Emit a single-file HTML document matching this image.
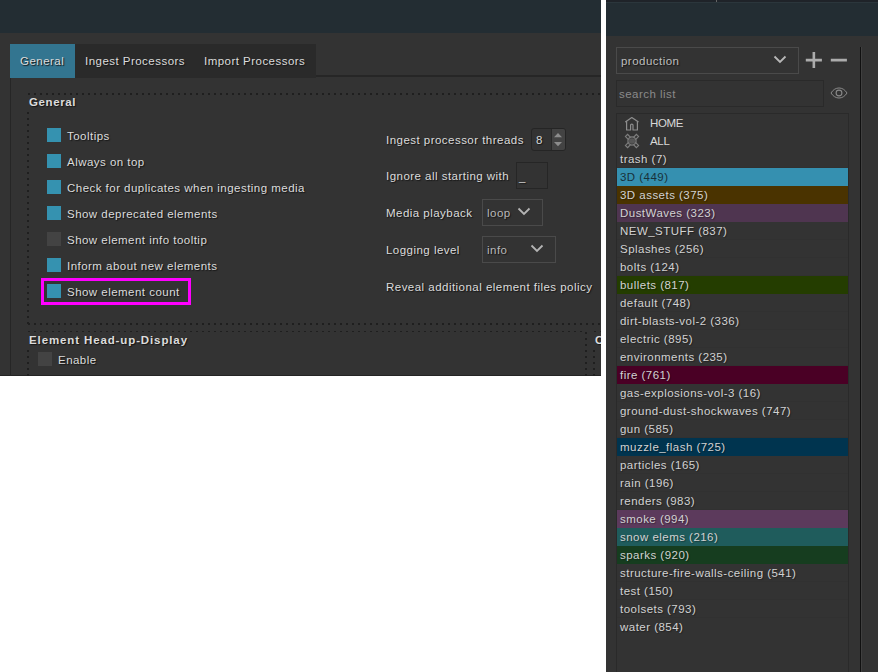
<!DOCTYPE html>
<html><head><meta charset="utf-8">
<style>
*{box-sizing:border-box;margin:0;padding:0}
html,body{width:878px;height:672px;overflow:hidden;background:#fff}
body{position:relative;font-family:"Liberation Sans",sans-serif;font-size:11.5px;letter-spacing:0.47px;color:#dcdcdc}
.a{position:absolute}
.t{position:absolute;white-space:nowrap;line-height:14px;height:14px}
.sh{text-shadow:1px 1px 1px #151515}
.b{font-weight:bold;letter-spacing:0.62px}
.hd{position:absolute;height:2px;background:repeating-linear-gradient(90deg,#1f1f1f 0 2px,transparent 2px 6px)}
.vd{position:absolute;width:2px;background:repeating-linear-gradient(180deg,#1f1f1f 0 2px,transparent 2px 6px)}
.cb{position:absolute;width:14px;height:14px;background:#3592b0}
.cb.off{background:#434343}
.row{position:absolute;left:617px;width:231px;height:18px}
.it{position:absolute;left:620px;white-space:nowrap;line-height:14px;height:14px;color:#d2d2d2;text-shadow:1px 1px 1px rgba(0,0,0,0.35)}
</style></head><body>

<!-- LEFT PANEL -->
<div class="a" style="left:0;top:0;width:601px;height:376px;background:#333333;overflow:hidden">
  <div class="a" style="left:0;top:0;width:601px;height:33px;background:#232d33"></div>
  <div class="a" style="left:0;top:375px;width:601px;height:1px;background:#242424"></div>
  <!-- tab frame -->
  <div class="a" style="left:10px;top:75px;width:600px;height:2px;background:#262626"></div>
  <div class="a" style="left:10px;top:76px;width:1px;height:300px;background:#262626"></div>
  <!-- tabs -->
  <div class="a" style="left:10px;top:44px;width:65px;height:34px;background:#337590"></div>
  <div class="a" style="left:75px;top:44px;width:241px;height:34px;background:#2a2a2a"></div>
  <div class="t sh" style="left:20px;top:54px">General</div>
  <div class="t sh" style="left:85px;top:54px">Ingest Processors</div>
  <div class="t sh" style="left:204px;top:54px">Import Processors</div>

  <!-- group 1 -->
  <div class="hd" style="left:28px;top:93px;width:580px;height:1.5px"></div>
  <div class="vd" style="left:27px;top:112px;height:212px"></div>
  <div class="hd" style="left:28px;top:323px;width:580px"></div>
  <div class="t sh b" style="left:29px;top:95px">General</div>

  <div class="cb" style="left:47px;top:128px"></div>
  <div class="t sh" style="left:67px;top:129px">Tooltips</div>
  <div class="cb" style="left:47px;top:154px"></div>
  <div class="t sh" style="left:67px;top:155px">Always on top</div>
  <div class="cb" style="left:47px;top:180px"></div>
  <div class="t sh" style="left:67px;top:181px">Check for duplicates when ingesting media</div>
  <div class="cb" style="left:47px;top:206px"></div>
  <div class="t sh" style="left:67px;top:207px">Show deprecated elements</div>
  <div class="cb off" style="left:47px;top:232px"></div>
  <div class="t sh" style="left:67px;top:233px">Show element info tooltip</div>
  <div class="cb" style="left:47px;top:258px"></div>
  <div class="t sh" style="left:67px;top:259px">Inform about new elements</div>
  <div class="cb" style="left:47px;top:284px"></div>
  <div class="t sh" style="left:67px;top:285px">Show element count</div>
  <div class="a" style="left:41px;top:278px;width:150px;height:27px;border:3px solid #ff00ff"></div>

  <div class="t sh" style="left:386px;top:133px">Ingest processor threads</div>
  <div class="a" style="left:531px;top:128px;width:35px;height:23px;border:1px solid #252525;border-radius:3px;background:#333"></div>
  <div class="a" style="left:551px;top:129px;width:1px;height:21px;background:#282828"></div>
  <div class="a" style="left:552px;top:129px;width:13px;height:21px;background:#434343;border-radius:0 2px 2px 0"></div>
  <svg class="a" style="left:552px;top:129px" width="13" height="21"><path d="M2 8.3 L6 4 L10 8.3Z M2 13 L6 17.2 L10 13Z" fill="#8c8c8c"/></svg>
  <div class="t sh" style="left:536px;top:133px;color:#d8d8d8">8</div>

  <div class="t sh" style="left:386px;top:169px">Ignore all starting with</div>
  <div class="a" style="left:516px;top:162px;width:32px;height:27px;border:1px solid #262626"></div>
  <div class="t sh" style="left:519px;top:170px;color:#d8d8d8">_</div>

  <div class="t sh" style="left:386px;top:206px">Media playback</div>
  <div class="a" style="left:482px;top:199px;width:61px;height:27px;border:1px solid #4a4a4a"></div>
  <div class="t sh" style="left:487px;top:206px;color:#b8b8b8">loop</div>
  <svg class="a" style="left:517px;top:207px" width="14" height="10"><path d="M1.5 1.5 L7 7 L12.5 1.5" stroke="#b4b4b4" stroke-width="1.8" fill="none"/></svg>

  <div class="t sh" style="left:386px;top:243px">Logging level</div>
  <div class="a" style="left:482px;top:236px;width:74px;height:27px;border:1px solid #4a4a4a"></div>
  <div class="t sh" style="left:487px;top:243px;color:#b8b8b8">info</div>
  <svg class="a" style="left:530px;top:244px" width="14" height="10"><path d="M1.5 1.5 L7 7 L12.5 1.5" stroke="#b4b4b4" stroke-width="1.8" fill="none"/></svg>

  <div class="t sh" style="left:386px;top:280px">Reveal additional element files policy</div>

  <!-- group 2 -->
  <div class="hd" style="left:28px;top:331px;width:554px;height:1px"></div>
  <div class="vd" style="left:27px;top:350px;height:30px"></div>
  <div class="vd" style="left:585px;top:332px;height:50px"></div>
  <div class="t sh b" style="left:29px;top:333px;letter-spacing:0.88px">Element Head-up-Display</div>
  <div class="cb off" style="left:38px;top:352px"></div>
  <div class="t sh" style="left:58px;top:353px">Enable</div>
  <!-- group 3 -->
  <div class="hd" style="left:594px;top:331px;width:20px;height:1px"></div>
  <div class="vd" style="left:593px;top:350px;height:30px"></div>
  <div class="t sh b" style="left:595px;top:333px">C</div>
</div>

<!-- RIGHT PANEL -->
<div class="a" style="left:606px;top:0;width:272px;height:672px;background:#333333;overflow:hidden">
  <div class="a" style="left:0;top:0;width:272px;height:36px;background:#232d33"></div>
  <div class="a" style="left:0;top:0;width:272px;height:2px;background:#1f2329"></div>
  <div class="a" style="left:0;top:2px;width:272px;height:1px;background:#2b363c"></div>
  <div class="a" style="left:110px;top:0;width:1px;height:2px;background:#666"></div>
</div>

<div class="a" style="left:616px;top:47px;width:183px;height:27px;border:1px solid #4a4a4a"></div>
<div class="t sh" style="left:621px;top:54px;color:#bebebe">production</div>
<svg class="a" style="left:773px;top:55px" width="14" height="10"><path d="M1.5 1.5 L7 7 L12.5 1.5" stroke="#b8b8b8" stroke-width="1.8" fill="none"/></svg>
<svg class="a" style="left:800px;top:44px" width="52" height="30"><path d="M5.8 16.1 H21.9 M13.85 8 V24 M30.8 16.1 H46.9" stroke="#acacac" stroke-width="2.6" fill="none"/></svg>

<div class="a" style="left:616px;top:80px;width:208px;height:27px;border:1px solid #2a2a2a"></div>
<div class="t" style="left:619px;top:87px;color:#8a8a8a">search list</div>
<svg class="a" style="left:828px;top:84px" width="22" height="18"><path d="M3 9 C7 2.3 15 2.3 19 9 C15 15.7 7 15.7 3 9Z" stroke="#8a8a8a" stroke-width="1" fill="none"/><circle cx="11" cy="9" r="2.9" stroke="#8a8a8a" stroke-width="1.1" fill="none"/></svg>

<div class="a" style="left:860px;top:47px;width:1px;height:625px;background:#101010"></div>
<div class="a" style="left:861px;top:47px;width:1px;height:625px;background:#404040"></div>

<!-- list -->
<div class="a" style="left:616px;top:113px;width:233px;height:570px;border:1px solid #2a2a2a;background:#333"></div>
<div class="a" style="left:617px;top:167px;width:231px;height:468px;background:repeating-linear-gradient(180deg,#313131 0 1px,transparent 1px 18px)"></div>
<svg class="a" style="left:620px;top:114px" width="24" height="18"><path d="M5.3 8.1 L11.8 3.5 L18.5 8.1 M6.6 7.6 V16 H10.6 V11 Q10.6 10.1 11.8 10.1 Q13 10.1 13 11 V16 H17.4 V7.6" stroke="#8e8e8e" stroke-width="1.2" fill="none" stroke-linejoin="round"/></svg>
<div class="t" style="left:650px;top:116px;color:#d8d8d8;letter-spacing:-0.4px">HOME</div>
<svg class="a" style="left:620px;top:132px" width="24" height="18"><g transform="translate(12 9)" stroke="#7e7e7e" stroke-width="1.1" fill="#333"><rect x="-7.8" y="-1.55" width="15.6" height="3.1" transform="rotate(45)"/><rect x="-7.8" y="-1.55" width="15.6" height="3.1" transform="rotate(-45)"/><circle r="4.1" stroke-width="1.2"/><path d="M-2 -2.8 V2.8 M0 -3.6 V3.6 M2 -2.8 V2.8 M-2.8 -1 H2.8 M-2.8 1 H2.8" stroke="#666" stroke-width="0.9" fill="none"/></g></svg>
<div class="t" style="left:650px;top:134px;color:#d8d8d8;letter-spacing:-0.3px">ALL</div>

<div class="row" style="top:168px;background:#3590b0"></div>
<div class="row" style="top:186px;background:#4a3300"></div>
<div class="row" style="top:204px;background:#4f3550"></div>
<div class="row" style="top:276px;background:#243d00"></div>
<div class="row" style="top:366px;background:#4a0025"></div>
<div class="row" style="top:438px;background:#00344f"></div>
<div class="row" style="top:510px;background:#5c3a5c"></div>
<div class="row" style="top:528px;background:#1f5c5c"></div>
<div class="row" style="top:546px;background:#163d1f"></div>

<div class="it" style="top:152px">trash (7)</div>
<div class="it" style="top:170px;color:#18303a;text-shadow:none">3D (449)</div>
<div class="it" style="top:188px">3D assets (375)</div>
<div class="it" style="top:206px">DustWaves (323)</div>
<div class="it" style="top:224px">NEW_STUFF (837)</div>
<div class="it" style="top:242px">Splashes (256)</div>
<div class="it" style="top:260px">bolts (124)</div>
<div class="it" style="top:278px">bullets (817)</div>
<div class="it" style="top:296px">default (748)</div>
<div class="it" style="top:314px">dirt-blasts-vol-2 (336)</div>
<div class="it" style="top:332px">electric (895)</div>
<div class="it" style="top:350px">environments (235)</div>
<div class="it" style="top:368px">fire (761)</div>
<div class="it" style="top:386px">gas-explosions-vol-3 (16)</div>
<div class="it" style="top:404px">ground-dust-shockwaves (747)</div>
<div class="it" style="top:422px">gun (585)</div>
<div class="it" style="top:440px">muzzle_flash (725)</div>
<div class="it" style="top:458px">particles (165)</div>
<div class="it" style="top:476px">rain (196)</div>
<div class="it" style="top:494px">renders (983)</div>
<div class="it" style="top:512px">smoke (994)</div>
<div class="it" style="top:530px">snow elems (216)</div>
<div class="it" style="top:548px">sparks (920)</div>
<div class="it" style="top:566px">structure-fire-walls-ceiling (541)</div>
<div class="it" style="top:584px">test (150)</div>
<div class="it" style="top:602px">toolsets (793)</div>
<div class="it" style="top:620px">water (854)</div>

</body></html>
